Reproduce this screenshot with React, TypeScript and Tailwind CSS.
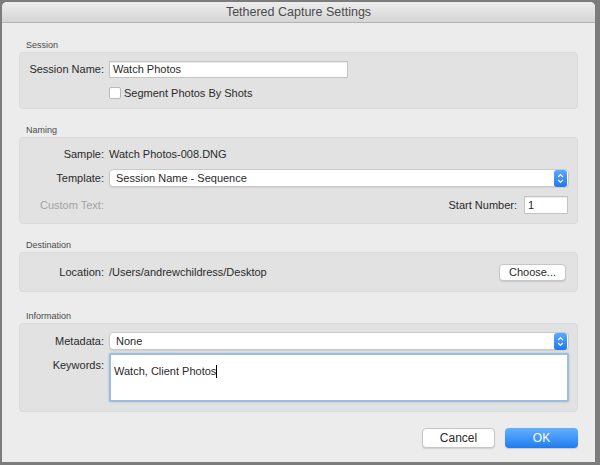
import React from "react";

const font = { fontFamily: '"Liberation Sans", Arial, sans-serif' };

function Stepper() {
  return (
    <div className="w-[13px] h-[17px] rounded-[3px] bg-gradient-to-b from-[#5aa9fb] to-[#1f77ee] flex items-center justify-center">
      <svg width="7" height="11" viewBox="0 0 7 11" fill="none" stroke="white" strokeWidth="1.2">
        <path d="M1.2 4 L3.5 1.7 L5.8 4" />
        <path d="M1.2 7 L3.5 9.3 L5.8 7" />
      </svg>
    </div>
  );
}

function Select({ value }: { value: string }) {
  return (
    <div className="flex-1 h-[18px] bg-white border border-[#c9c9c9] rounded-[4px] shadow-[0_1px_1px_rgba(0,0,0,0.08)] flex items-center justify-between pl-[6px] pr-[1px]">
      <span className="text-[11px] text-[#2a2a2a]">{value}</span>
      <Stepper />
    </div>
  );
}

function GroupLabel({ children }: { children: React.ReactNode }) {
  return <div className="text-[9px] text-[#4a4a4a] pl-[7px] h-[13px] leading-[13px]">{children}</div>;
}

function Label({ children, muted }: { children: React.ReactNode; muted?: boolean }) {
  return (
    <div className={`w-[84px] shrink-0 text-right text-[11px] ${muted ? "text-[#a3a3a3]" : "text-[#2a2a2a]"}`}>
      {children}
    </div>
  );
}

export default function App() {
  return (
    <div style={font} className="w-[600px] h-[465px] bg-[#7c7c7c] pt-[2px] pl-[2px] pr-[5px] pb-[3px] flex">
      <div className="flex-1 flex flex-col bg-[#ececec] rounded-t-[5px] overflow-hidden">
        {/* title bar */}
        <div className="h-[21px] shrink-0 bg-gradient-to-b from-[#ededed] to-[#d5d5d5] border-b border-[#b3b3b3] flex items-center justify-center">
          <span className="text-[12.5px] text-[#4b4b4b]">Tethered Capture Settings</span>
        </div>

        <div className="flex-1 flex flex-col px-[17px] pt-[16px]">
          {/* Session */}
          <GroupLabel>Session</GroupLabel>
          <div className="bg-[#e2e2e2] border border-[#dadada] rounded-[4px] h-[57px] pt-[8px] pr-[8px] flex flex-col">
            <div className="flex items-center gap-[5px] h-[17px]">
              <Label>Session Name:</Label>
              <div className="w-[239px] h-[17px] bg-white border border-[#c4c4c4] shadow-[inset_0_1px_1px_rgba(0,0,0,0.08)] flex items-center pl-[3px]">
                <span className="text-[11px] text-[#2a2a2a]">Watch Photos</span>
              </div>
            </div>
            <div className="flex items-center mt-[7px] ml-[89px] gap-[3px]">
              <div className="w-[12px] h-[12px] bg-white border border-[#b9b9b9] rounded-[2px]" />
              <span className="text-[11px] text-[#2a2a2a]">Segment Photos By Shots</span>
            </div>
          </div>

          {/* Naming */}
          <div className="mt-[15px]">
            <GroupLabel>Naming</GroupLabel>
          </div>
          <div className="bg-[#e2e2e2] border border-[#dadada] rounded-[4px] h-[87px] pt-[9px] pr-[8px] flex flex-col">
            <div className="flex items-center gap-[5px] h-[14px]">
              <Label>Sample:</Label>
              <span className="text-[11px] text-[#2a2a2a]">Watch Photos-008.DNG</span>
            </div>
            <div className="flex items-center gap-[5px] mt-[8px]">
              <Label>Template:</Label>
              <Select value="Session Name - Sequence" />
            </div>
            <div className="flex items-center gap-[5px] mt-[9px] pr-[1px]">
              <Label muted>Custom Text:</Label>
              <div className="flex-1" />
              <span className="text-[11px] text-[#2a2a2a]">Start Number:</span>
              <div className="w-[44px] h-[18px] bg-white border border-[#c4c4c4] shadow-[inset_0_1px_1px_rgba(0,0,0,0.08)] flex items-center pl-[3px] ml-[2px]">
                <span className="text-[11px] text-[#2a2a2a]">1</span>
              </div>
            </div>
          </div>

          {/* Destination */}
          <div className="mt-[15px]">
            <GroupLabel>Destination</GroupLabel>
          </div>
          <div className="bg-[#e2e2e2] border border-[#dadada] rounded-[4px] h-[40px] pr-[11px] flex items-center gap-[5px]">
            <Label>Location:</Label>
            <span className="text-[11px] text-[#2a2a2a] flex-1">/Users/andrewchildress/Desktop</span>
            <div className="w-[67px] h-[17px] bg-white border border-[#c6c6c6] rounded-[4px] shadow-[0_1px_1px_rgba(0,0,0,0.12)] flex items-center justify-center">
              <span className="text-[11px] text-[#2a2a2a]">Choose...</span>
            </div>
          </div>

          {/* Information */}
          <div className="mt-[18px]">
            <GroupLabel>Information</GroupLabel>
          </div>
          <div className="bg-[#e2e2e2] border border-[#dadada] rounded-[4px] h-[89px] pt-[8px] pr-[8px] flex flex-col">
            <div className="flex items-center gap-[5px]">
              <Label>Metadata:</Label>
              <Select value="None" />
            </div>
            <div className="flex items-start gap-[5px] mt-[3px]">
              <div className="pt-[4px]">
                <Label>Keywords:</Label>
              </div>
              <div className="flex-1 h-[49px] bg-white border-[2px] border-[#9dbde0] rounded-[2px] shadow-[0_0_2px_rgba(80,140,220,0.5)] pl-[3px] pt-[3px]">
                <span className="text-[11px] text-[#2a2a2a]">Watch, Client Photos</span>
                <span className="inline-block w-px h-[13px] bg-black align-[-3px]" />
              </div>
            </div>
          </div>

          {/* Buttons */}
          <div className="flex justify-end gap-[10px] mt-[16px]">
            <div className="w-[73px] h-[20px] bg-white border border-[#c6c6c6] rounded-[4px] shadow-[0_1px_1px_rgba(0,0,0,0.12)] flex items-center justify-center">
              <span className="text-[12px] text-[#2a2a2a]">Cancel</span>
            </div>
            <div className="w-[73px] h-[20px] bg-gradient-to-b from-[#63b0fc] to-[#1c7cf3] rounded-[4px] shadow-[0_1px_1px_rgba(0,0,0,0.15)] flex items-center justify-center">
              <span className="text-[12px] text-white">OK</span>
            </div>
          </div>
        </div>
      </div>
    </div>
  );
}
